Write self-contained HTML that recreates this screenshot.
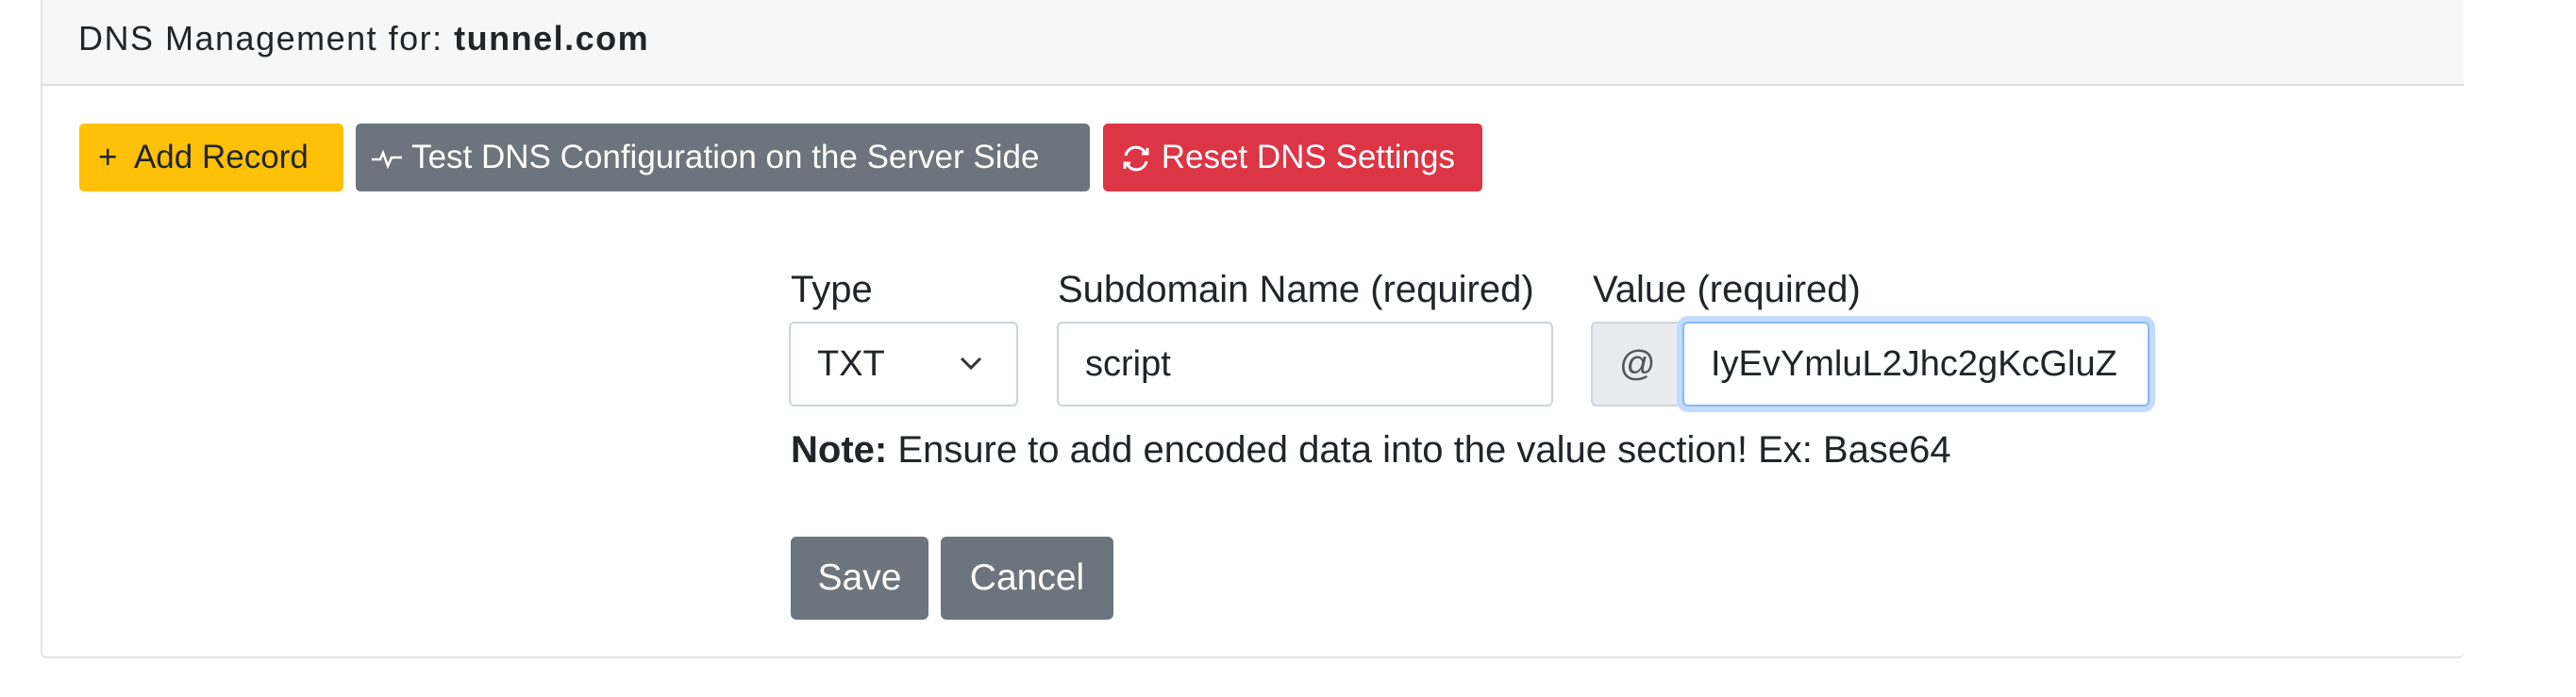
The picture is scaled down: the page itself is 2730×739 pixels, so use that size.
<!DOCTYPE html>
<html><head><meta charset="utf-8"><style>
*{box-sizing:border-box;margin:0;padding:0}
body{width:2730px;height:739px;background:#fff;font-family:"Liberation Sans",sans-serif;color:#212529;position:relative;overflow:hidden}
.card{position:absolute;left:43px;top:-4px;width:2568px;height:702px;border:2px solid #e3e3e3;border-radius:6px;border-right:none}
.hdr{position:absolute;left:0;top:0;right:0;height:93px;background:#f7f7f7;border-bottom:2px solid #dfdfdf}
.hdr span{position:absolute;left:38px;top:22px;font-size:36px;letter-spacing:1.5px}
.btn{position:absolute;top:131px;height:72px;border-radius:5px;font-size:35px;line-height:72px;padding-left:20px;white-space:nowrap}
.abs{position:absolute;white-space:nowrap}
.lbl{font-size:40px;top:285px}
.inp{position:absolute;top:341px;height:90px;border:2px solid #ced4da;border-radius:6px;font-size:38px;line-height:86px;padding-left:28px;background:#fff}
.gb{position:absolute;top:569px;height:88px;background:#6c757d;color:#fff;border-radius:6px;font-size:39px;line-height:88px;text-align:center}
</style></head><body>
<div class="card"><div class="hdr"><span>DNS Management for: <b>tunnel.com</b></span></div></div>
<div class="btn" style="left:84px;width:280px;background:#ffc107;color:#212529">+&nbsp; Add Record</div>
<div class="btn" style="left:377px;width:778px;background:#6c757d;color:#fff;padding-left:16px"><svg width="34" height="28" viewBox="0 0 34 28" style="vertical-align:-4px"><path d="M1 15h9l3-7 5 14 4-9h11" fill="none" stroke="#fff" stroke-width="2.5"/></svg> Test DNS Configuration on the Server Side</div>
<div class="btn" style="left:1169px;width:402px;background:#dc3545;color:#fff;padding-left:18px"><svg width="34" height="30" viewBox="0 0 34 30" style="vertical-align:-5px"><path d="M6 12a11 11 0 0 1 21-2M28 18a11 11 0 0 1-21 2" fill="none" stroke="#fff" stroke-width="3"/><path d="M23 10h6V4M11 20H5v6" fill="none" stroke="#fff" stroke-width="3"/></svg> Reset DNS Settings</div>
<div class="abs lbl" style="left:838px">Type</div>
<div class="abs lbl" style="left:1121px">Subdomain Name (required)</div>
<div class="abs lbl" style="left:1688px">Value (required)</div>
<div class="inp" style="left:836px;width:243px">TXT<svg style="position:absolute;left:178px;top:34px" width="26" height="16" viewBox="0 0 26 16"><path d="M3 3l10 10 10-10" fill="none" stroke="#333" stroke-width="3"/></svg></div>
<div class="inp" style="left:1120px;width:526px">script</div>
<div class="inp" style="left:1686px;width:110px;background:#e9ecef;border-radius:6px 0 0 6px;color:#555">@</div>
<div class="inp" style="left:1783px;width:495px;border-color:#86b7fe;box-shadow:0 0 0 6px #c2dbfe;overflow:hidden">IyEvYmluL2Jhc2gKcGluZ</div>
<div class="abs" style="left:838px;top:455px;font-size:40px"><b>Note:</b> Ensure to add encoded data into the value section! Ex: Base64</div>
<div class="gb" style="left:838px;width:146px">Save</div>
<div class="gb" style="left:997px;width:183px">Cancel</div>
</body></html>
